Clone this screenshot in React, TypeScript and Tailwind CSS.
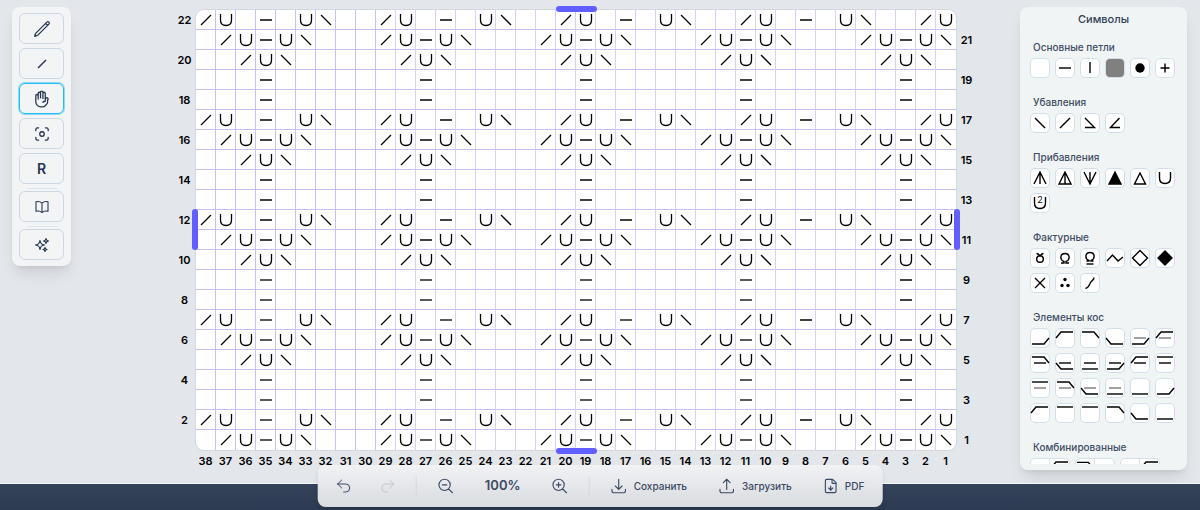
import { useState, type ReactNode } from "react";
import clsx from "clsx";
import {
    HiOutlineArrowDownTray,
    HiOutlineArrowUpTray,
    HiOutlineArrowUturnLeft,
    HiOutlineArrowUturnRight,
    HiOutlineBookOpen,
    HiOutlineHandRaised,
    HiOutlineMagnifyingGlassMinus,
    HiOutlineMagnifyingGlassPlus,
    HiOutlinePencil,
    HiOutlineSparkles,
    HiOutlineViewfinderCircle,
} from "react-icons/hi2";
import { FileDown } from "lucide-react";

const COLS = 38;
const ROWS = 22;

type Stitch = "left" | "right" | "yarn" | "purl";

const STITCHES: Record<Stitch, string> = {
    right: "M5 15L15 5",
    left: "M5 5L15 15",
    yarn: "M4.5 4V10C4.5 13.5 6.5 15.5 10 15.5S15.5 13.5 15.5 10V4",
    purl: "M4 10H16",
};

const WIDE: Record<number, Stitch> = { 2: "right", 1: "yarn", 8: "purl", 6: "yarn", 5: "left" };
const MIDDLE: Record<number, Stitch> = { 5: "right", 4: "yarn", 3: "purl", 2: "yarn", 1: "left" };
const NARROW: Record<number, Stitch> = { 4: "right", 3: "yarn", 2: "left" };

function stitchAt(row: number, col: number): Stitch | undefined {
    switch (row % 5) {
        case 2:
            return WIDE[col % 9];
        case 1:
            return MIDDLE[col % 8];
        case 0:
            return NARROW[col % 8];
        default:
            return col % 8 === 3 ? "purl" : undefined;
    }
}

const rows = Array.from({ length: ROWS }, (_, i) => ROWS - i);
const cols = Array.from({ length: COLS }, (_, i) => COLS - i);

const tools = [
    { id: "draw", label: "Карандаш", icon: <HiOutlinePencil className="size-[18px] stroke-[1.7]" /> },
    { id: "symbol", label: "Символ", icon: <svg viewBox="0 0 20 20" className="size-5" stroke="currentColor" strokeWidth="1.4"><path d="M6 14L14 6" /></svg> },
    { id: "pan", label: "Перемещение", icon: <HiOutlineHandRaised className="size-[18px] stroke-[1.7]" /> },
    { id: "select", label: "Выделение", icon: <HiOutlineViewfinderCircle className="size-[18px] stroke-[1.7]" /> },
    { id: "repeat", label: "Раппорт", icon: <span className="text-sm font-semibold">R</span> },
    { id: "legend", label: "Легенда", icon: <HiOutlineBookOpen className="size-4 stroke-[1.6]" />, divider: true },
    { id: "magic", label: "Генерация", icon: <HiOutlineSparkles className="size-4 stroke-[1.7]" />, divider: true },
];

function Tools() {
    const [active, setActive] = useState("pan");
    return (
        <aside className="ml-3 mt-[7px] flex w-[59px] shrink-0 flex-col gap-1 self-start rounded-lg bg-[#f3f4f6] px-[7px] py-1.5 shadow-lg">
            {tools.map((t) => (
                <div key={t.id} className="flex flex-col items-center gap-0.5">
                    {t.divider && <hr className="w-[30px] border-[#dde3ea]" />}
                    <button
                        type="button"
                        aria-label={t.label}
                        onClick={() => setActive(t.id)}
                        className={clsx(
                            "flex h-[31px] w-full items-center justify-center rounded-md border text-[#26354d]",
                            active === t.id ? "border-[#22bdf5] ring-1 ring-[#22bdf5]/50" : "border-[#ccd7e4]"
                        )}
                    >
                        {t.icon}
                    </button>
                </div>
            ))}
        </aside>
    );
}

function RowLabels({ parity, className }: { parity: number; className: string }) {
    return (
        <div className={clsx("flex w-5 flex-col text-[11px] font-semibold text-black", className)}>
            {rows.map((r) => (
                <span key={r} className="flex h-5 items-center justify-center">{r % 2 === parity ? r : ""}</span>
            ))}
        </div>
    );
}

function Handle({ className }: { className: string }) {
    return <span className={clsx("absolute rounded-full bg-[#615fff]", className)} />;
}

function Cell({ row, col }: { row: number; col: number }) {
    const stitch = stitchAt(row, col);
    return (
        <div
            className={clsx(
                "size-5",
                row > 1 && "border-b border-b-[#c9c0f2]",
                col > 1 && "border-r",
                col > 29 ? "border-r-[#c9c0f2]" : "border-r-[#d8cff8]"
            )}
        >
            {stitch && (
                <svg viewBox="0 0 20 20" className="size-5 text-black" fill="none" stroke="currentColor" strokeWidth="1.3">
                    <path d={STITCHES[stitch]} />
                </svg>
            )}
        </div>
    );
}

function Chart() {
    return (
        <main className="flex flex-1 justify-center pl-[60px] pt-[10px]">
            <RowLabels parity={0} className="mr-px" />
            <div>
                <div className="relative">
                    <div className="overflow-hidden rounded-lg bg-white ring-1 ring-[#d3d7de]">
                        {rows.map((r) => (
                            <div key={r} className="flex">
                                {cols.map((c) => <Cell key={c} row={r} col={c} />)}
                            </div>
                        ))}
                    </div>
                    <Handle className="-top-1 left-[360px] h-1.5 w-[41px]" />
                    <Handle className="-bottom-1 left-[360px] h-1.5 w-[41px]" />
                    <Handle className="-left-1 top-[199px] h-[41px] w-1.5" />
                    <Handle className="-right-1 top-[199px] h-[41px] w-1.5" />
                </div>
                <div className="flex pt-[3px] text-[11px] font-semibold text-black">
                    {cols.map((c) => (
                        <span key={c} className="w-5 text-center leading-4">{c}</span>
                    ))}
                </div>
            </div>
            <RowLabels parity={1} className="ml-px" />
        </main>
    );
}

const MID = <path d="M4 10H16" />;
const MID_LIGHT = <path d="M4 10H16" stroke="#444" strokeWidth="1" />;
const TOP = "M2 4H18";
const TOP_RIGHT = "M2 4H14L19 10";
const TOP_LEFT = "M1 10L6 4H18";
const BOTTOM = "M2 16H18";
const BOTTOM_RIGHT = "M2 16H14L19 10";
const BOTTOM_LEFT = "M1 10L6 16H18";

const groups: { title: string; symbols: ReactNode[] }[] = [
    {
        title: "Основные петли",
        symbols: [
            null,
            <path d={STITCHES.purl} />,
            <path d="M10 4V15" />,
            <rect x="1" y="1" width="18" height="18" rx="4" fill="#808080" stroke="none" />,
            <circle cx="10" cy="10" r="4.7" fill="currentColor" stroke="none" />,
            <path d="M5.5 10H14.5M10 5.5V14.5" />,
        ],
    },
    {
        title: "Убавления",
        symbols: [
            <path d={STITCHES.left} />,
            <path d={STITCHES.right} />,
            <path d="M5 5L14.5 14.5H5" />,
            <path d="M14.5 5L5.5 14.5H15" />,
        ],
    },
    {
        title: "Прибавления",
        symbols: [
            <path d="M4 16L10 4L16 16M10 4V16" />,
            <path d="M10 4L16 16H4ZM10 4V16" />,
            <path d="M4 4L10 16L16 4M10 4V16" />,
            <path d="M10 4L16 16H4Z" fill="currentColor" />,
            <path d="M10 5L15.5 16H4.5Z" />,
            <path d={STITCHES.yarn} />,
            <>
                <path d={STITCHES.yarn} />
                <text x="10" y="10" textAnchor="middle" fontSize="9" fill="currentColor" stroke="none">2</text>
            </>,
        ],
    },
    {
        title: "Фактурные",
        symbols: [
            <><circle cx="10" cy="11" r="3.3" /><path d="M6.5 5.5Q8 5.5 10 7.7Q12 5.5 13.5 5.5" /></>,
            <path d="M6 15H9V13.5C4.5 12 5 5.5 10 5.5S15.5 12 11 13.5V15H14" />,
            <><path d="M6.5 13H9V12.5C4.5 11 5 4.5 10 4.5S15.5 11 11 12.5V13H13.5" /><path d="M6.5 16H13.5" /></>,
            <path d="M2 13L7.5 7L13 13L18 9" />,
            <path d="M10 2.5L17.5 10L10 17.5L2.5 10Z" />,
            <path d="M10 3L17 10L10 17L3 10Z" fill="currentColor" />,
            <path d="M5 5L15 15M15 5L5 15" />,
            <g fill="currentColor" stroke="none"><circle cx="10" cy="6.5" r="1.7" /><circle cx="7" cy="12.5" r="1.7" /><circle cx="13" cy="12.5" r="1.7" /></g>,
            <path d="M5.5 15.5C8 15 9 13 10 10.5C11 7.5 14 7.5 14 4.5" />,
        ],
    },
    {
        title: "Элементы кос",
        symbols: [
            <path d={BOTTOM_RIGHT} />,
            <path d={TOP_LEFT} />,
            <path d={TOP_RIGHT} />,
            <path d={BOTTOM_LEFT} />,
            <><path d={BOTTOM_RIGHT} />{MID_LIGHT}</>,
            <><path d={TOP_LEFT} />{MID_LIGHT}</>,
            <><path d={TOP_RIGHT} />{MID}</>,
            <><path d={BOTTOM_LEFT} />{MID}</>,
            <><path d={BOTTOM} />{MID}</>,
            <><path d={BOTTOM_RIGHT} />{MID}</>,
            <><path d={TOP_LEFT} />{MID}</>,
            <><path d={TOP} />{MID}</>,
            <><path d={TOP} />{MID_LIGHT}</>,
            <><path d={TOP_RIGHT} />{MID_LIGHT}</>,
            <><path d={BOTTOM_LEFT} />{MID_LIGHT}</>,
            <><path d={BOTTOM} />{MID_LIGHT}</>,
            <path d={BOTTOM} />,
            <path d={BOTTOM_RIGHT} />,
            <path d={TOP_LEFT} />,
            <path d={TOP} />,
            <path d={TOP} />,
            <path d={TOP_RIGHT} />,
            <path d={BOTTOM_LEFT} />,
            <path d={BOTTOM} />,
        ],
    },
];

const combined: (string | null)[][] = [
    [null, TOP_LEFT],
    [TOP_RIGHT, null],
    [null, TOP_LEFT],
];

function Symbol({ children }: { children: ReactNode }) {
    return (
        <svg viewBox="0 0 20 20" className="size-5 shrink-0 text-black" fill="none" stroke="currentColor" strokeWidth="1.4" aria-hidden="true">
            {children}
        </svg>
    );
}

function GroupTitle({ children }: { children: ReactNode }) {
    return <h3 className="mb-[3px] pl-[3px] text-[10px] font-medium leading-4 text-[#3f4d63]">{children}</h3>;
}

function Palette() {
    return (
        <aside className="mb-[13px] mr-[13px] mt-[7px] flex w-[167px] shrink-0 flex-col rounded-lg bg-[#f0f4f5] px-2.5 pb-1.5 shadow-lg">
            <h2 className="py-1 text-center text-[11px] font-medium leading-4 text-[#334155]">Символы</h2>
            <div className="flex min-h-0 flex-1 flex-col gap-4 overflow-hidden pt-2">
                {groups.map((g) => (
                    <section key={g.title}>
                        <GroupTitle>{g.title}</GroupTitle>
                        <div className="flex flex-wrap gap-[5px]">
                            {g.symbols.map((s, i) => (
                                <button key={i} type="button" aria-label={`${g.title} ${i + 1}`} className="flex size-5 items-center justify-center rounded-[5px] border border-[#d3deeb] bg-white">
                                    <Symbol>{s}</Symbol>
                                </button>
                            ))}
                        </div>
                    </section>
                ))}
                <section>
                    <GroupTitle>Комбинированные</GroupTitle>
                    <div className="flex gap-[5px]">
                        {combined.map((parts, i) => (
                            <button key={i} type="button" aria-label={`Комбинированные ${i + 1}`} className="flex h-5 w-10 items-center justify-center divide-x divide-[#d3deeb] rounded-[5px] border border-[#d3deeb] bg-white">
                                {parts.map((d, n) => (
                                    <Symbol key={n}>{d && <path d={d} />}</Symbol>
                                ))}
                            </button>
                        ))}
                    </div>
                </section>
            </div>
        </aside>
    );
}

function Divider() {
    return <span className="h-5 w-px bg-[#d5d9de]" />;
}

function Toolbar() {
    const [zoom, setZoom] = useState(100);
    return (
        <div className="absolute bottom-[3px] left-1/2 flex h-[42px] -translate-x-1/2 items-center gap-5 rounded-lg bg-linear-to-b from-[#f1f2f4] to-[#d8dbdf] px-[18px] text-[10px] font-medium text-[#3b4a63] shadow-md">
            <div className="flex gap-7">
                <button type="button" aria-label="Отменить"><HiOutlineArrowUturnLeft className="size-4" /></button>
                <button type="button" aria-label="Повторить" disabled className="text-[#c3c8cf]"><HiOutlineArrowUturnRight className="size-4" /></button>
            </div>
            <Divider />
            <div className="flex items-center gap-[29px]">
                <button type="button" aria-label="Уменьшить" onClick={() => setZoom(zoom - 10)}><HiOutlineMagnifyingGlassMinus className="size-[18px]" /></button>
                <span className="w-[38px] text-center text-[13px] font-semibold">{zoom}%</span>
                <button type="button" aria-label="Увеличить" onClick={() => setZoom(zoom + 10)}><HiOutlineMagnifyingGlassPlus className="size-[18px]" /></button>
            </div>
            <Divider />
            <div className="flex items-center gap-[31px]">
                <button type="button" className="flex items-center gap-1.5"><HiOutlineArrowDownTray className="size-[18px]" />Сохранить</button>
                <button type="button" className="flex items-center gap-1.5"><HiOutlineArrowUpTray className="size-[18px]" />Загрузить</button>
                <button type="button" className="flex items-center gap-1.5"><FileDown className="size-4" strokeWidth={1.7} />PDF</button>
            </div>
        </div>
    );
}

export default function App() {
    return (
        <div className="relative flex h-screen flex-col overflow-hidden bg-[#e3e6eb] font-['Inter',sans-serif]">
            <div className="flex min-h-0 flex-1">
                <Tools />
                <Chart />
                <Palette />
            </div>
            <footer className="h-[27px] border-t border-[#f4f6f8] bg-linear-to-b from-[#35435b] to-[#2c3a52]" />
            <Toolbar />
        </div>
    );
}
